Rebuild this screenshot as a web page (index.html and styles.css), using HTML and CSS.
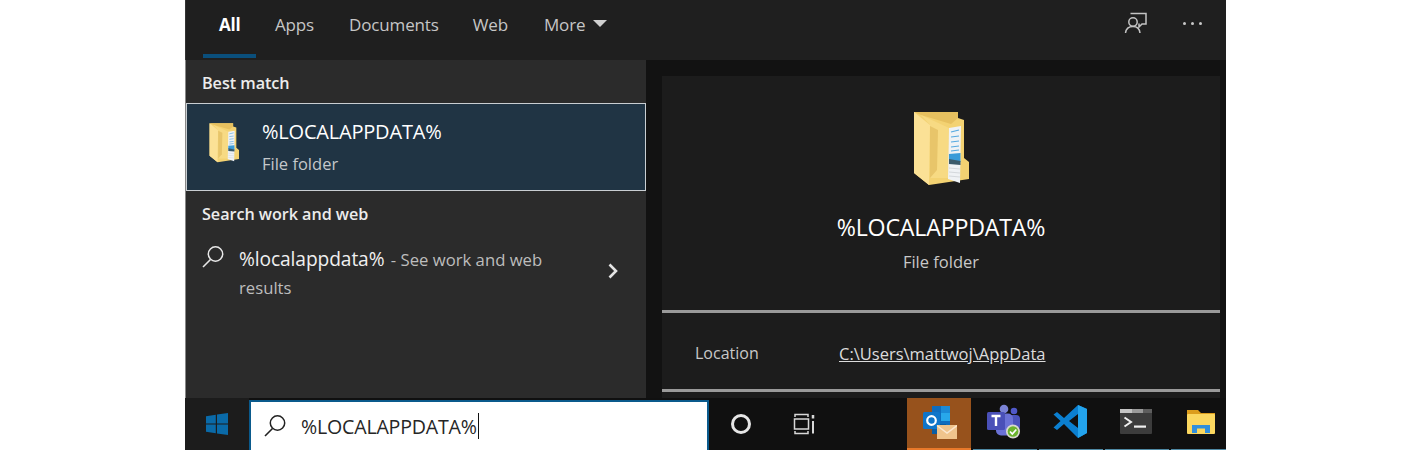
FILE: index.html
```html
<!DOCTYPE html>
<html lang="en">
<head>
<meta charset="utf-8">
<title>Windows search</title>
<link rel="stylesheet" href="styles.css">
</head>
<body>
<svg class="defs" width="0" height="0" aria-hidden="true">
  <defs>
    <symbol id="folder" viewBox="0 0 56 74">
      <path d="M1 0 L45 0 L45 6 L51 8 L51 46 L56 50 L56 67 L16 73 L1 61 Z" fill="#f3d272"/>
      <path d="M1 0 L45 0 L45 6 L38 12 L8 3 Z" fill="#e6c05f"/>
      <path d="M8 3 L36 16 L35 66 L17 66 L17 13 Z" fill="#f7da83"/>
      <path d="M17 14 L25 18 L24 58 L17 66 Z" fill="#e8c56a"/>
      <path d="M1 0 L17 13 L16 73 L1 61 Z" fill="#fbe196"/>
      <path d="M36 16 L48 14 L47 71 L35 67 Z" fill="#eff2f5"/>
      <path d="M38 20 L46 18 M38 25 L46 24 M38 30 L46 29 M38 35 L46 34 M38 39 L46 38" stroke="#55a8e0" stroke-width="1.200"/>
      <path d="M36 42 L47.500 41 L47.500 50 L36 48 Z" fill="#3a9bd8"/>
      <path d="M36 47 L47.500 49 L47.500 53 L36 52 Z" fill="#3a5a6a"/>
      <path d="M36 56 L47 57 M36 60 L47 61 M36 64 L47 65" stroke="#d4d8dc" stroke-width="1"/>
    </symbol>
    <symbol id="lens" viewBox="0 0 24 24">
      <circle cx="14.500" cy="9" r="7.200" fill="none" stroke="currentColor" stroke-width="1.500"/>
      <path d="M9.500 14.500 L2 22" fill="none" stroke="currentColor" stroke-width="1.600"/>
    </symbol>
  </defs>
</svg>
<div class="window">
  <header class="tabs">
    <nav class="tablist">
      <span class="tab tab-active">All</span>
      <span class="tab">Apps</span>
      <span class="tab">Documents</span>
      <span class="tab tab-web">Web</span>
      <span class="tab tab-more">More <i class="caret"></i></span>
    </nav>
    <div class="tools">
      <svg class="feedback" width="24" height="24" viewBox="0 0 24 24" fill="none" stroke="#c4c4c4" stroke-width="1.500">
        <path d="M6.500 2.500 H22 V13 H18 L15 16 V12.500"/>
        <circle cx="9" cy="11" r="4.200"/>
        <path d="M1.500 22 C2 17.500 5 15.500 9 15.500 C13 15.500 15.500 17.500 16 22"/>
      </svg>
      <span class="dots"><i></i><i></i><i></i></span>
    </div>
  </header>
  <main class="body">
    <section class="results">
      <h2 class="group-title">Best match</h2>
      <div class="match">
        <svg class="match-icon" width="30" height="40"><use href="#folder"/></svg>
        <div class="match-text">
          <div class="match-name">%LOCALAPPDATA%</div>
          <div class="match-type">File folder</div>
        </div>
      </div>
      <h2 class="group-title group-web">Search work and web</h2>
      <div class="web-row">
        <svg class="web-lens" width="24" height="24"><use href="#lens"/></svg>
        <p class="web-text"><span class="web-query">%localappdata%</span> <span class="web-rest">- See work and web results</span></p>
        <svg class="chevron" width="12" height="16" viewBox="0 0 12 16" fill="none" stroke="#e4e4e4" stroke-width="2.600"><path d="M2.500 1.500 L9 8 L2.500 14.500"/></svg>
      </div>
    </section>
    <section class="preview">
      <div class="card">
        <div class="hero">
          <svg class="hero-icon" width="56" height="74"><use href="#folder"/></svg>
          <div class="hero-name">%LOCALAPPDATA%</div>
          <div class="hero-type">File folder</div>
        </div>
        <div class="props">
          <span class="prop-label">Location</span>
          <a class="prop-link">C:\Users\mattwoj\AppData</a>
        </div>
      </div>
    </section>
  </main>
  <footer class="taskbar">
    <div class="start">
      <svg width="22" height="22" viewBox="0 0 22 22" fill="#0a6aa8"><path d="M0 3.200 L9.800 1.800 V10.400 H0 Z M11 1.600 L22 0 V10.400 H11 Z M0 11.600 H9.800 V20.200 L0 18.800 Z M11 11.600 H22 V22 L11 20.400 Z"/></svg>
    </div>
    <div class="searchbox">
      <svg class="search-lens" width="24" height="24"><use href="#lens"/></svg>
      <span class="search-value">%LOCALAPPDATA%</span><i class="cursor"></i>
    </div>
    <div class="tb-btn tb-cortana"><i class="ring"></i></div>
    <div class="tb-btn tb-view">
      <svg width="24" height="22" viewBox="0 0 24 22" fill="none" stroke="#d8d8d8" stroke-width="1.500">
        <path d="M2 4 V1.500 H15 V4 M2 18 V20.500 H15 V18"/>
        <rect x="1.500" y="6" width="14" height="10"/>
        <path d="M20 8 V20.500" stroke-width="2"/>
        <path d="M20 2 V5.500" stroke-width="2.500"/>
      </svg>
    </div>
    <div class="tb-spacer"></div>
    <div class="tb-app tb-active">
      <svg width="36" height="36" viewBox="0 0 36 36">
        <rect x="11" y="2" width="18" height="22" fill="#0f6cbd"/>
        <rect x="20" y="2" width="9" height="7" fill="#1b8ad6"/>
        <rect x="20" y="9" width="9" height="8" fill="#28a8ea"/>
        <rect x="11" y="20" width="14" height="10" fill="#0a5da3"/>
        <rect x="2" y="8" width="17" height="17" rx="1.500" fill="#0f75c9"/>
        <circle cx="10.500" cy="16.500" r="4.300" fill="none" stroke="#fff" stroke-width="2.200"/>
        <rect x="16" y="21" width="20" height="14" fill="#f0c48c"/>
        <path d="M16 21.500 L26 29 L36 21.500" fill="none" stroke="#fbe7cf" stroke-width="1.500"/>
      </svg>
    </div>
    <div class="tb-app tb-open tb-teams">
      <svg width="36" height="36" viewBox="0 0 36 36">
        <circle cx="18" cy="5" r="4.300" fill="#7b83d6"/>
        <circle cx="28" cy="7" r="3.300" fill="#5059c9"/>
        <rect x="22" y="11" width="12" height="15" rx="4" fill="#4b53bc"/>
        <rect x="10" y="9.500" width="17" height="22" rx="5" fill="#6b72d6"/>
        <rect x="1" y="8" width="18" height="18" rx="1.500" fill="#4a50b8"/>
        <path d="M5.500 12 H14.500 M10 12 V22" stroke="#fff" stroke-width="2.400" fill="none"/>
        <circle cx="27" cy="27.500" r="7" fill="#d9d9d0"/>
        <circle cx="27" cy="27.500" r="5.300" fill="#6bb42d"/>
        <path d="M24 27.500 L26.300 30 L30.300 25.500" stroke="#fff" stroke-width="1.700" fill="none"/>
      </svg>
    </div>
    <div class="tb-app tb-open">
      <svg width="36" height="36" viewBox="0 0 36 36">
        <path d="M25 1 L34 5 V29 L25 34 L11 20 L4 26 L0.500 23.500 L7.500 17 L0.500 10.500 L4 8 L11 14 Z M25 10 L16 17 L25 24 Z" fill="#0b7fd0" fill-rule="evenodd"/>
        <path d="M25 1 L34 5 V29 L25 34 Z" fill="#23a3ec"/>
      </svg>
    </div>
    <div class="tb-app tb-open">
      <svg width="34" height="28" viewBox="0 0 34 28">
        <rect width="32" height="25" y="1" rx="1" fill="#3c3c3c"/>
        <rect width="12" height="4" y="1" fill="#c4c4c4"/>
        <rect width="11" height="4" x="12" y="1" fill="#9a9a9a"/>
        <rect width="9" height="4" x="23" y="1" fill="#5e5e5e"/>
        <path d="M4.500 9.500 L11 14 L4.500 18.500" stroke="#efefef" stroke-width="2" fill="none"/>
        <rect x="14" y="17.500" width="12" height="2.200" fill="#efefef"/>
      </svg>
    </div>
    <div class="tb-app tb-open tb-last">
      <svg width="30" height="30" viewBox="0 0 30 30">
        <path d="M1 3 H12 L15 6 H29 V24 H1 Z" fill="#dc9d1c"/>
        <rect x="1" y="7" width="28" height="20" rx="1" fill="#fbd75f"/>
        <path d="M6 26 V18 H24 V26 H19 V21.500 H11 V26 Z" fill="#2f8fdd"/>
        <rect x="11" y="22" width="8" height="5" fill="#fbd75f"/>
      </svg>
    </div>
  </footer>
</div>
</body>
</html>
```
FILE: styles.css
```css
* { box-sizing: border-box; }
html, body { margin: 0; height: 100%; background: #fff; overflow: hidden; }
body { font-family: "Open Sans", "Noto Sans", "Liberation Sans", sans-serif; color: #e6e6e6; }
.defs { display: block; }
.window { display: flex; flex-direction: column; width: 1041px; height: 450px; margin-left: 185px; }

.tabs { display: flex; justify-content: space-between; height: 60px; background: #1f1f1f; border-left: 1px solid #333; padding-left: 17px; }
.tablist { display: flex; }
.tab { display: flex; align-items: center; height: 58px; padding: 0 16px 10px; font-size: 17px; color: #c6c6c6; margin-right: 3px; letter-spacing: -0.150px; }
.tab-active { color: #fff; font-weight: 700; width: 53px; padding: 0 0 10px 16px; margin-right: 3px; box-shadow: inset 0 -4px 0 #0a4f7c; }
.tab-web { padding-left: 15px; padding-right: 17px; }
.tab-more { gap: 8px; }
.caret { width: 0; height: 0; border-left: 7px solid transparent; border-right: 7px solid transparent; border-top: 7px solid #cfcfcf; margin-top: -2px; }
.tools { display: flex; align-items: flex-start; padding: 11px 24px 0 0; gap: 35px; }
.feedback { display: block; }
.dots { display: flex; gap: 5px; padding-top: 11px; }
.dots i { width: 3px; height: 3px; border-radius: 50%; background: #c8c8c8; }

.body { display: flex; height: 338px; }
.results { width: 461px; background: #2b2b2b; border-left: 1px solid #888; }
.group-title { margin: 0; font-size: 16.200px; line-height: 22px; font-weight: 600; color: #ececec; padding: 12px 0 0 16px; height: 43px; letter-spacing: -0.050px; }
.group-web { padding-top: 12px; height: 42px; }
.match { display: flex; align-items: center; width: 460px; height: 88px; background: #203444; border: 1.500px solid #c9ced2; padding-left: 22px; gap: 23px; }
.match-icon { display: block; margin-top: -8px; }
.match-text { display: flex; flex-direction: column; padding-top: 2px; }
.match-name { font-size: 20px; line-height: 26px; color: #fff; letter-spacing: -0.200px; margin-top: -2px; }
.match-type { font-size: 16.500px; line-height: 22px; color: #c4c8cb; margin-top: 8px; }
.web-row { display: flex; padding: 11px 0 0 15px; }
.web-lens { color: #e8e8e8; margin: 1px 14px 0 0; flex: none; }
.web-text { margin: 2px 0 0; width: 320px; font-size: 16.700px; line-height: 28px; color: #bdbdbd; }
.web-query { font-size: 19.200px; line-height: 24px; color: #f0f0f0; letter-spacing: -0.100px; margin-right: 2px; }
.web-rest { line-height: 28px; }
.chevron { margin: 19px 0 0 48px; flex: none; }

.preview { flex: 1; background: #121212; padding: 16px 6px 0 16px; }
.card { height: 100%; background: #1c1c1c; display: flex; flex-direction: column; }
.hero { display: flex; flex-direction: column; align-items: center; height: 237px; padding-top: 36px; border-bottom: 3px solid #9a9a9a; }
.hero-icon { display: block; }
.hero-name { font-size: 23.200px; line-height: 30px; color: #fff; margin-top: 26px; letter-spacing: -0.200px; }
.hero-type { font-size: 16.500px; line-height: 22px; color: #c8c8c8; margin-top: 9px; }
.props { display: flex; align-items: center; height: 79px; padding: 4px 0 0 33px; border-bottom: 3px solid #9a9a9a; }
.prop-label { width: 144px; font-size: 16px; color: #c8c8c8; }
.prop-link { font-size: 16.500px; color: #dcdcdc; text-decoration: underline; }

.taskbar { display: flex; height: 52px; background: #101010; }
.start { display: flex; align-items: center; justify-content: center; width: 64px; background: #1c1c1c; }
.searchbox { display: flex; align-items: center; width: 460px; background: #fff; border: 2px solid #0a5a8c; border-bottom: 0; padding: 0 0 0 12px; color: #222; margin-top: 2px; }
.search-lens { color: #222; margin-right: 14px; }
.search-value { font-size: 19.600px; letter-spacing: -0.200px; color: #262626; }
.cursor { width: 1.500px; height: 26px; background: #111; margin-left: 1px; }
.tb-btn { display: flex; align-items: center; justify-content: center; width: 64px; }
.ring { width: 20px; height: 20px; border: 3px solid #e6e6e6; border-radius: 50%; }
.tb-spacer { flex: 1; }
.tb-app { display: flex; align-items: center; justify-content: center; width: 64px; margin-left: 2px; padding-bottom: 4px; box-shadow: inset 0 -1px 0 #4f8aa5; }
.tb-active { background: #97521c; box-shadow: inset 0 -2px 0 #e8792a; margin-left: 0; }
.tb-teams { padding-right: 2px; }
.tb-last { width: 55px; padding-left: 4px; }
```
